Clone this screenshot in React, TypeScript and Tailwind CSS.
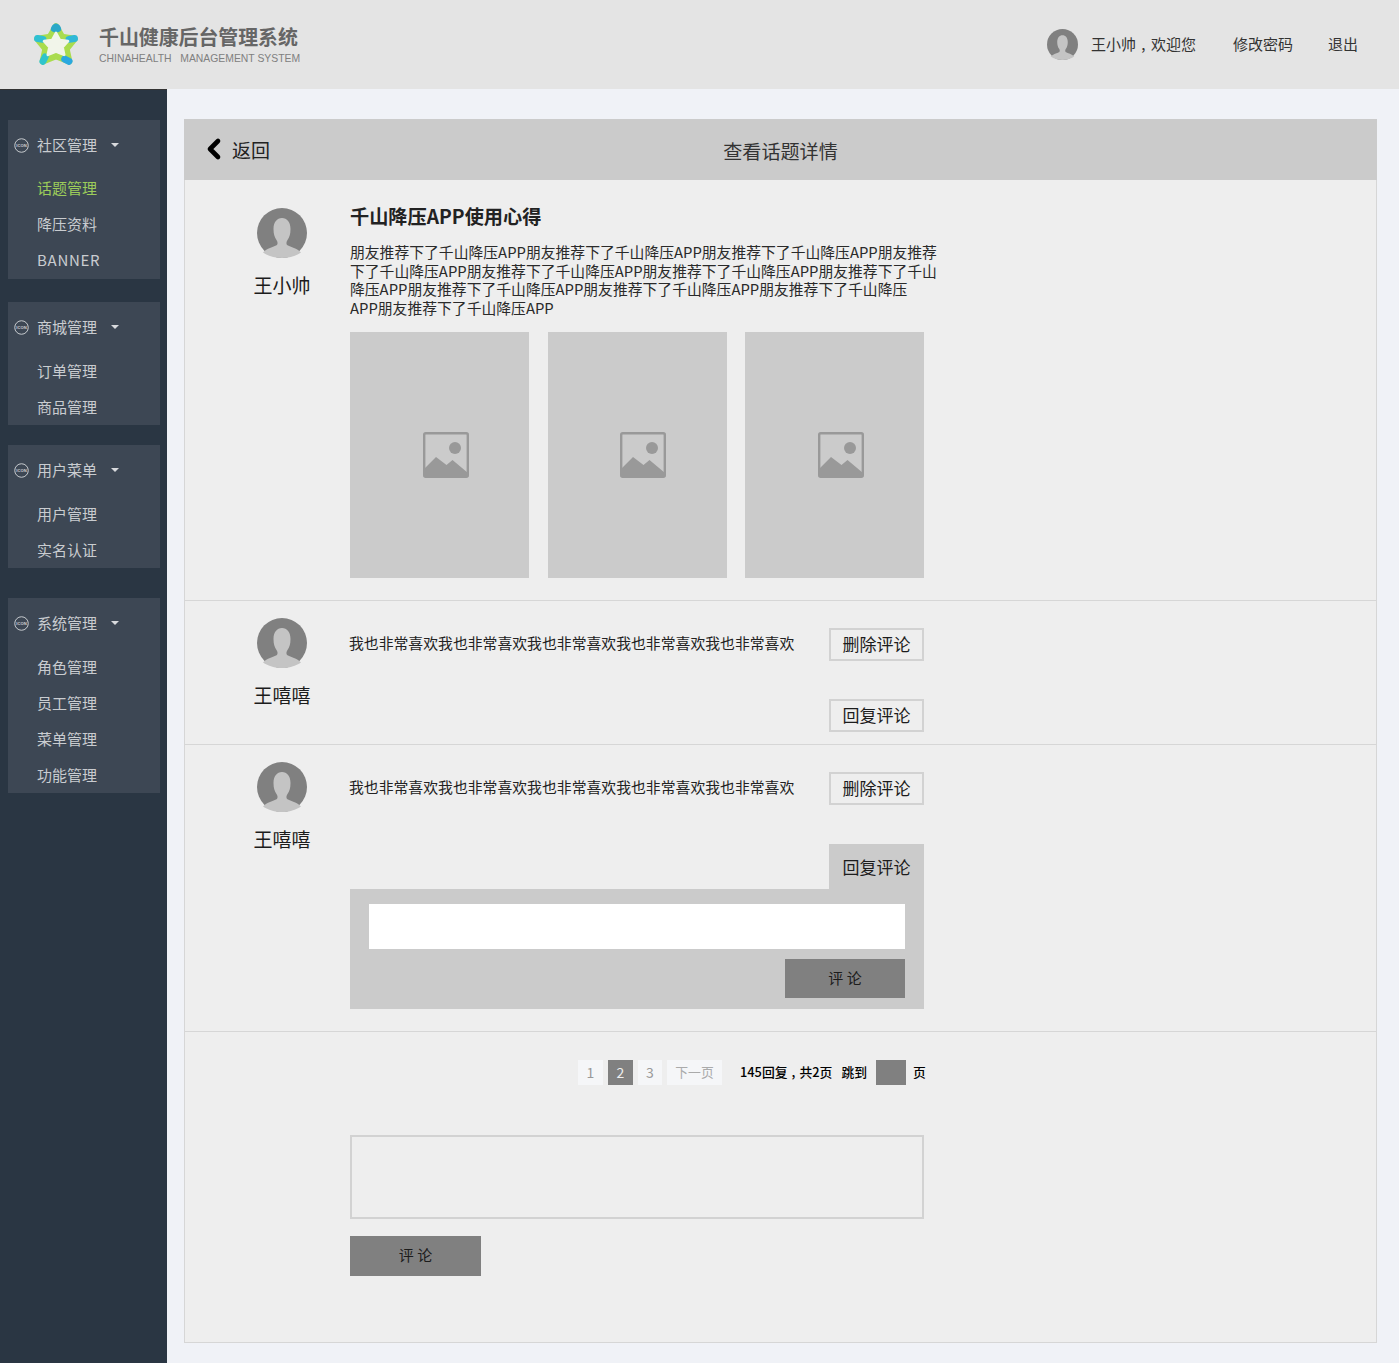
import React from 'react';
import { ChevronLeft } from 'lucide-react';

const CJK = { fontFamily: '"Noto Sans CJK SC", "Noto Sans", sans-serif' };

const menuGroups = [
  { title: '社区管理', items: ['话题管理', '降压资料', 'BANNER'], margin: 'mt-[30px]' },
  { title: '商城管理', items: ['订单管理', '商品管理'], margin: 'mt-[23.5px]' },
  { title: '用户菜单', items: ['用户管理', '实名认证'], margin: 'mt-[20.5px]' },
  { title: '系统管理', items: ['角色管理', '员工管理', '菜单管理', '功能管理'], margin: 'mt-[30.5px]' },
];

const Avatar: React.FC<{ className: string }> = ({ className }) => (
  <svg viewBox="0 0 50 50" className={className}>
    <circle cx="25" cy="25" r="25" fill="#808080" />
    <path
      d="M6 44.5 C10 40 16 39.5 20 37 C21 35.5 20.6 33.5 19.5 32 C17.5 29 16.5 26 16.5 21 C16.5 14 20 10 25 10 C30 10 33.5 14 33.5 21 C33.5 26 32.5 29 30.5 32 C29.4 33.5 29 35.5 30 37 C34 39.5 40 40 44 44.5 C39 48 32 50 25 50 C18 50 11 48 6 44.5 Z"
      fill="#c4c4c4"
    />
  </svg>
);

const Logo = () => (
  <svg viewBox="0 0 46 46" className="w-[50px] h-[50px] -mx-[2px]">
    <path
      d="M23 6 L28.5 15.5 L40 17.5 L32.5 26.5 L35 38 L23 33 L11 38 L13.5 26.5 L6 17.5 L17.5 15.5 Z"
      fill="#f1f5ea"
      stroke="#a9dc4e"
      strokeWidth="6"
      strokeLinejoin="round"
    />
    <g fill="none" strokeWidth="6.4" strokeLinecap="round">
      <path d="M21.5 8 Q23 5 24.5 8" stroke="#2aa8c8" />
      <path d="M6 17 L11 17.8" stroke="#2fc0d2" />
      <path d="M40 17 L35 17.8" stroke="#2fb8d8" />
      <path d="M11 38 L13 34" stroke="#2fc4cc" />
      <path d="M35 38 L31 36" stroke="#2aa8e0" />
    </g>
    <path
      d="M23 12 L26.5 18.5 L34 19.5 L29 25 L30.5 32 L23 29 L15.5 32 L17 25 L12 19.5 L19.5 18.5 Z"
      fill="#f1f5ea"
      stroke="#f1f5ea"
      strokeWidth="2.5"
      strokeLinejoin="round"
    />
  </svg>
);

const IconBadge = () => (
  <svg viewBox="0 0 16 16" className="w-[15px] h-[15px] shrink-0">
    <circle cx="8" cy="8" r="7.2" fill="none" stroke="#d0d3d6" strokeWidth="1" />
    <text x="8" y="9.6" textAnchor="middle" fontSize="4.4" fontWeight="bold" fill="#d0d3d6" fontFamily="Liberation Sans">
      ICON
    </text>
  </svg>
);

const ImageIcon = () => (
  <svg viewBox="0 0 46 46" className="w-[46px] h-[46px]">
    <rect x="1.2" y="1.2" width="43.6" height="43.6" rx="1.5" fill="none" stroke="#999" strokeWidth="2.4" />
    <circle cx="32" cy="16" r="6" fill="#999" />
    <path d="M1 37 L13 25 L23.5 33 L29.5 28 L45 41 L45 45 L1 45 Z" fill="#999" />
  </svg>
);

const OutlineButton: React.FC<{ label: string }> = ({ label }) => (
  <button className="block w-[95px] h-[33px] border-2 border-[#d2d2d2] text-[17px] leading-[28px] pb-[2px] text-[#1c1c1c]">
    {label}
  </button>
);

const UserColumn: React.FC<{ name: string }> = ({ name }) => (
  <div className="ml-[47px] w-[100px] shrink-0 flex flex-col items-center">
    <Avatar className="w-[50px] h-[50px]" />
    <div className="mt-[14px] text-[19px] leading-[26px] text-[#1c1c1c]">{name}</div>
  </div>
);

const Sidebar = () => (
  <aside className="w-[167px] shrink-0 bg-[#2a3643] pl-[8px] pr-[7px] border-t border-[#333]">
    {menuGroups.map((group, index) => (
      <div key={group.title} className={`${group.margin} bg-[#3d4754]`}>
        <div className="h-[50.5px] flex items-center pl-[6px] text-[15px] text-[#c9ccd0]">
          <IconBadge />
          <span className="ml-[8px]">{group.title}</span>
          <span className="ml-[14px] w-0 h-0 border-x-[4px] border-x-transparent border-t-[4px] border-t-[#d8dadd]" />
        </div>
        {group.items.map((item) => (
          <div
            key={item}
            className={`h-[36px] pl-[29px] text-[15px] ${index === 0 ? 'leading-[34px]' : 'leading-[36px]'} ${
              index === 0 && item === '话题管理' ? 'text-[#9ccc5a]' : 'text-[#c9ccd0]'
            } ${item === 'BANNER' ? 'tracking-[0.7px] text-[14px]' : ''}`}
          >
            {item}
          </div>
        ))}
      </div>
    ))}
  </aside>
);

const commentText = '我也非常喜欢我也非常喜欢我也非常喜欢我也非常喜欢我也非常喜欢';

export default function App() {
  return (
    <div className="w-full h-[1363px] flex flex-col bg-[#f0f2f7] overflow-hidden" style={CJK}>
      <header className="h-[89px] shrink-0 bg-[#e4e4e4] flex items-center pl-[33px] pr-[41px]">
        <Logo />
        <div className="ml-[20px] mt-[-1px]">
          <div className="text-[19.9px] leading-[28px] font-bold text-[#666]">千山健康后台管理系统</div>
          <div className="mt-[1px] text-[10.4px] leading-[14px] text-[#808080] whitespace-pre" style={{ fontFamily: '"Liberation Sans", sans-serif' }}>
            CHINAHEALTH{'   '}MANAGEMENT SYSTEM
          </div>
        </div>
        <div className="ml-auto flex items-center text-[15px] text-[#333]">
          <Avatar className="w-[31px] h-[31px]" />
          <span className="ml-[13px]">
            王小帅<span className="inline-block w-[15px] text-center">,</span>欢迎您
          </span>
          <span className="ml-[37px]">修改密码</span>
          <span className="ml-[35px]">退出</span>
        </div>
      </header>

      <div className="flex flex-1 min-h-0">
        <Sidebar />

        <main className="flex-1 pt-[30px] pl-[17px] pr-[22px]">
          <div className="h-[1224px] border border-[#d6d6d6] bg-[#eeeeee] flex flex-col">
            <div className="relative h-[61px] -m-px mb-0 bg-[#cbcbcb] flex items-center justify-center">
              <div className="absolute left-[14px] top-[14px] flex items-center text-[19px] text-[#222]">
                <ChevronLeft className="w-[32px] h-[32px] text-black" strokeWidth={3.5} />
                <span className="ml-[2px] pt-[2px]">返回</span>
              </div>
              <span className="pt-[3px] text-[19.1px] text-[#333]">查看话题详情</span>
            </div>

            {/* topic */}
            <section className="h-[421px] shrink-0 flex border-b border-[#d6d6d6] pt-[28px]">
              <UserColumn name="王小帅" />
              <div className="ml-[18px]">
                <h2 className="-mt-[3px] text-[19.2px] leading-[22px] font-bold text-[#222]">千山降压APP使用心得</h2>
                <p className="mt-[16px] w-[592px] text-[14.82px] leading-[18.7px] text-[#2a2a2a]">
                  朋友推荐下了千山降压APP朋友推荐下了千山降压APP朋友推荐下了千山降压APP朋友推荐
                  <br />
                  下了千山降压APP朋友推荐下了千山降压APP朋友推荐下了千山降压APP朋友推荐下了千山
                  <br />
                  降压APP朋友推荐下了千山降压APP朋友推荐下了千山降压APP朋友推荐下了千山降压
                  <br />
                  APP朋友推荐下了千山降压APP
                </p>
                <div className="mt-[14px] w-[574px] grid grid-cols-3 gap-[18.5px]">
                  {[0, 1, 2].map((n) => (
                    <div key={n} className="h-[246px] bg-[#cbcbcb] flex items-center justify-center pl-[12px]">
                      <ImageIcon />
                    </div>
                  ))}
                </div>
              </div>
            </section>

            {/* first comment */}
            <section className="h-[144px] shrink-0 flex border-b border-[#d6d6d6] pt-[17px]">
              <UserColumn name="王嘻嘻" />
              <div className="ml-[18px] w-[574px] flex justify-between">
                <p className="mt-[13px] -ml-px text-[14.85px] leading-[24px] text-[#222] whitespace-nowrap">{commentText}</p>
                <div className="mt-[10px]">
                  <OutlineButton label="删除评论" />
                  <div className="mt-[38px]">
                    <OutlineButton label="回复评论" />
                  </div>
                </div>
              </div>
            </section>

            {/* second comment with open reply box */}
            <section className="h-[287px] shrink-0 flex border-b border-[#d6d6d6] pt-[17px]">
              <UserColumn name="王嘻嘻" />
              <div className="ml-[18px] w-[574px]">
                <div className="flex justify-between">
                  <p className="mt-[13px] -ml-px text-[14.85px] leading-[24px] text-[#222] whitespace-nowrap">{commentText}</p>
                  <div className="mt-[10px]">
                    <OutlineButton label="删除评论" />
                  </div>
                </div>
                <div className="mt-[39px] ml-auto w-[95px] h-[45px] bg-[#cbcbcb] text-center text-[17px] leading-[45px] text-[#1c1c1c]">
                  回复评论
                </div>
                <div className="h-[120px] bg-[#cbcbcb] px-[19px] pt-[15px]">
                  <div className="h-[45px] bg-white" />
                  <button className="block ml-auto mt-[10px] w-[120px] h-[39px] bg-[#808080] text-[15px] text-[#1c1c1c]">
                    评 论
                  </button>
                </div>
              </div>
            </section>

            {/* pagination and new comment */}
            <section className="flex-1 pl-[165px] pt-[28px]">
              <div className="w-[574px] flex items-center h-[25px] pl-[228px] text-[12.8px] text-black">
                <span className="shrink-0 w-[25px] h-[25px] bg-[#f5f6f8] text-[#999] text-[14px] text-center leading-[25px]">1</span>
                <span className="shrink-0 ml-[5px] w-[25px] h-[25px] bg-[#808080] text-[#eee] text-[14px] text-center leading-[25px]">2</span>
                <span className="shrink-0 ml-[5px] w-[24px] h-[25px] bg-[#f5f6f8] text-[#999] text-[14px] text-center leading-[25px]">3</span>
                <span className="shrink-0 ml-[5px] w-[55px] h-[25px] bg-[#f5f6f8] text-[#aaa] text-center leading-[23px]">下一页</span>
                <span className="shrink-0 ml-[18px] pb-[2px] font-medium whitespace-nowrap">
                  145回复<span className="inline-block w-[12px] text-center">,</span>共2页
                </span>
                <span className="shrink-0 ml-[9px] pb-[2px] font-medium whitespace-nowrap">跳到</span>
                <span className="shrink-0 ml-[9px] w-[30px] h-[25px] bg-[#808080]" />
                <span className="shrink-0 ml-[7px] pb-[2px] font-medium">页</span>
              </div>
              <div className="mt-[50px] w-[574px] h-[84px] border-2 border-[#d2d2d2]" />
              <button className="block mt-[17px] w-[131px] h-[40px] pb-[2px] bg-[#808080] text-[15px] text-[#1c1c1c]">评 论</button>
            </section>
          </div>
        </main>
      </div>
    </div>
  );
}
